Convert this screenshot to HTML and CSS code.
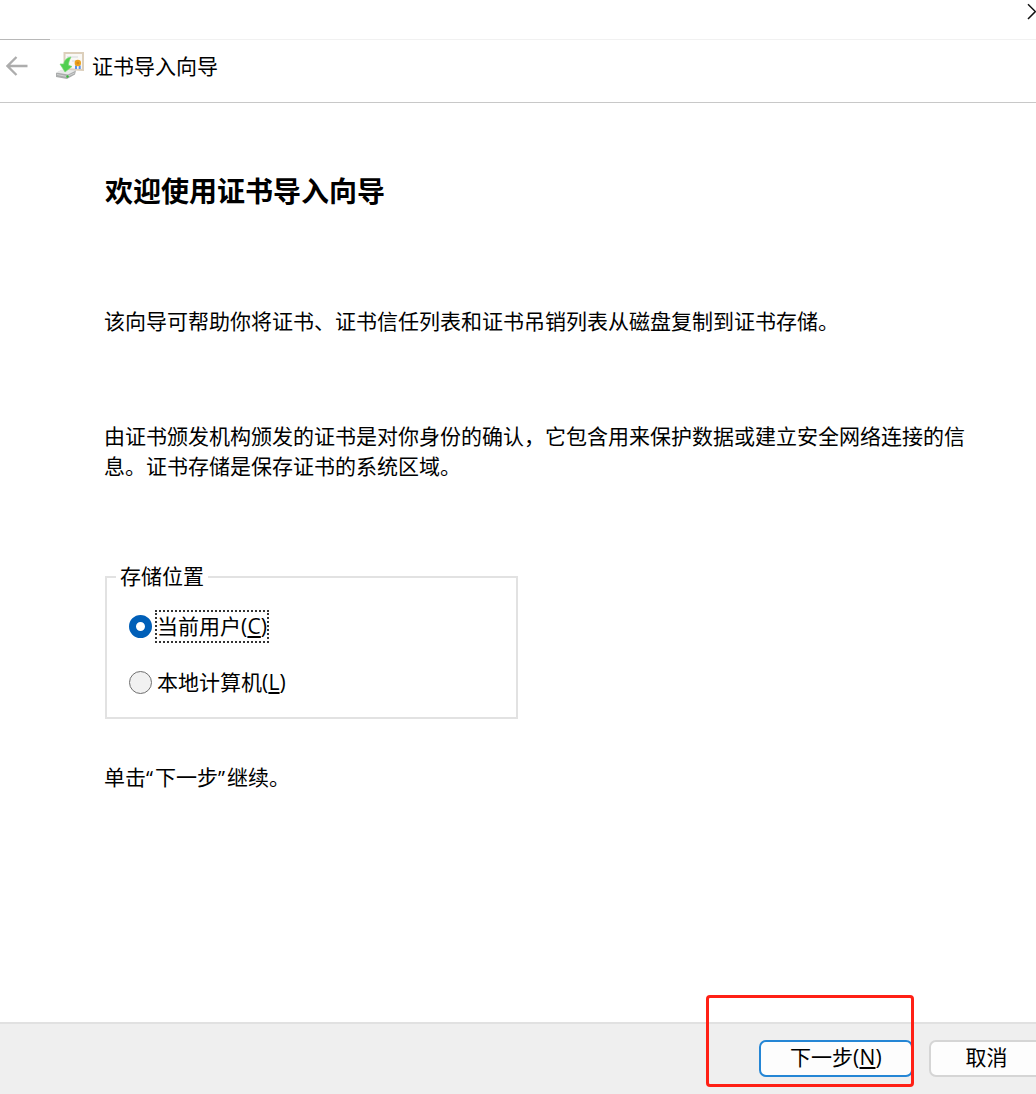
FILE: index.html
```html
<!DOCTYPE html>
<html lang="zh-CN">
<head>
<meta charset="utf-8">
<title>证书导入向导</title>
<link rel="stylesheet" href="styles.css">
</head>
<body>
<div class="wizard">
  <div class="titlebar">
    <svg class="close" width="9" height="18" viewBox="0 0 9 18"><path d="M1 1.2 8.6 8.8M1 16 8.6 8.4" fill="none" stroke="#111" stroke-width="1.5"/></svg>
  </div>
  <header class="header">
    <svg class="back" width="22" height="20" viewBox="0 0 22 20"><path d="M10.5 1 1.5 10 10.5 19M1.5 10H21.5" fill="none" stroke="#adadad" stroke-width="2.3"/></svg>
    <svg class="cert" width="29" height="29" viewBox="0 0 29 29">
      <path d="M8.5 2H27V19L8.5 18Z" fill="#f9f8f5" stroke="#dccfbb" stroke-width="2"/>
      <path d="M11 6H22M16 10h5" stroke="#e1e3e5" stroke-width="1.5"/>
      <path d="M20 14.5V18M23.7 14.5V18" stroke="#5b92e8" stroke-width="2"/>
      <circle cx="21.8" cy="12" r="3.2" fill="#eca11b"/><circle cx="21.8" cy="12" r="1.3" fill="#d98a15"/>
      <path d="M0 22 6 19 20 19.5 19 23.5 11 28 0 26Z" fill="#aaacac"/>
      <path d="M0 21.5 6 18.5 20 19.5 12 23.5Z" fill="#e8e9e9"/>
      <path d="M1 23.5 11 25.5 18.5 22" fill="none" stroke="#d0d2d2"/>
      <path d="M10.5 26 12.5 25" stroke="#36b53b" stroke-width="2"/>
      <path d="M15 6C10 7 8 10 7.8 13L4 13 9 21 16 15.5 12.5 14.2C12.5 11.5 13.5 9 15 6Z" fill="#51cf50" stroke="#7bd876" stroke-width=".7"/>
    </svg>
    <span class="caption">证书导入向导</span>
  </header>
  <main class="content">
    <h1>欢迎使用证书导入向导</h1>
    <p class="intro">该向导可帮助你将证书、证书信任列表和证书吊销列表从磁盘复制到证书存储。</p>
    <p class="detail">由证书颁发机构颁发的证书是对你身份的确认，它包含用来保护数据或建立安全网络连接的信息。证书存储是保存证书的系统区域。</p>
    <section class="group">
      <div class="legend">存储位置</div>
      <div class="option"><span class="radio checked"></span><span class="label focused">当前用户<span class="key">(<u>C</u>)</span></span></div>
      <div class="option"><span class="radio"></span><span class="label">本地计算机<span class="key">(<u>L</u>)</span></span></div>
    </section>
    <p class="hint">单击<span class="quote">“</span>下一步<span class="quote">”</span>继续。</p>
  </main>
  <footer class="footer">
    <div class="button primary">下一步<span class="key">(<u>N</u>)</span></div>
    <div class="button cancel">取消</div>
    <div class="highlight"></div>
  </footer>
</div>
</body>
</html>
```
FILE: styles.css
```css
* { box-sizing: border-box; }
body { margin: 0; background: #fff; overflow: hidden; }
.wizard {
  display: flex; flex-direction: column; width: 1036px; height: 1094px;
  font: 21px/30px "Noto Sans CJK SC", sans-serif; color: #000;
}
h1, p { margin: 0; }
.titlebar {
  display: flex; justify-content: flex-end; height: 40px; padding-top: 3px;
  background: linear-gradient(to right, #b8b8b8 50px, #f1f1f1 50px) bottom / 100% 1px no-repeat;
}
.close { display: block; }
.header {
  display: flex; align-items: center; height: 63px; padding: 0 0 11px 6px;
  border-bottom: 1px solid #c8c8c8;
}
.cert { margin-left: 28px; }
.caption { margin: -2px 0 0 7px; }
.content { flex: 1; padding: 0 66px 0 105px; }
h1 { margin-top: 67px; font-size: 28px; line-height: 40px; font-weight: 700; }
.intro { margin: 95px 0 0 -1px; }
.detail { margin: 85px 0 0 -1px; width: 865px; }
.group {
  width: 413px; height: 143px; margin-top: 96px; padding: 0 0 0 24px;
  border: 2px solid #e2e2e2;
}
.legend {
  width: 92px; height: 30px; margin: -18px 0 0 -15px; padding-left: 4px;
  line-height: 30px; background: #fff;
}
.option { display: flex; align-items: center; height: 34px; margin-top: 19px; margin-left: -2px; }
.option + .option { margin-top: 22px; }
.radio { width: 23px; height: 23px; border: 1.5px solid #707070; border-radius: 50%; background: #f1f1f1; }
.radio.checked { border: 7px solid #005fb8; background: #fff; }
.label { height: 33px; margin-left: 3px; padding: 0 1px; line-height: 28px; border: 1px solid transparent; white-space: nowrap; }
.label.focused { border: 2px dotted #333; padding: 0; line-height: 27px; }
.key { font-family: "Open Sans", sans-serif; font-size: 21px; letter-spacing: .2px; }
.key u { text-underline-offset: 2px; text-decoration-thickness: 1.5px; }
.quote { display: inline-block; width: 9px; font-family: "Open Sans", sans-serif; font-size: 20px; }
.hint { margin: 42px 0 0 -1px; }
.footer {
  position: relative; display: flex; height: 72px; padding: 16px 0 0 759px;
  background: #efefef; border-top: 2px solid #e1e1e1; gap: 16px;
}
.button {
  flex: none; width: 154px; height: 37px; line-height: 29px; text-align: center;
  background: #fdfdfd; border: 2px solid #d5d5d5; border-radius: 7px;
}
.primary { border-color: #2586d5; }
.cancel { width: 115px; }
.highlight {
  position: absolute; left: 706px; top: -29px; width: 208px; height: 92px;
  border: 3px solid #ff2015; border-radius: 4px;
}
```
